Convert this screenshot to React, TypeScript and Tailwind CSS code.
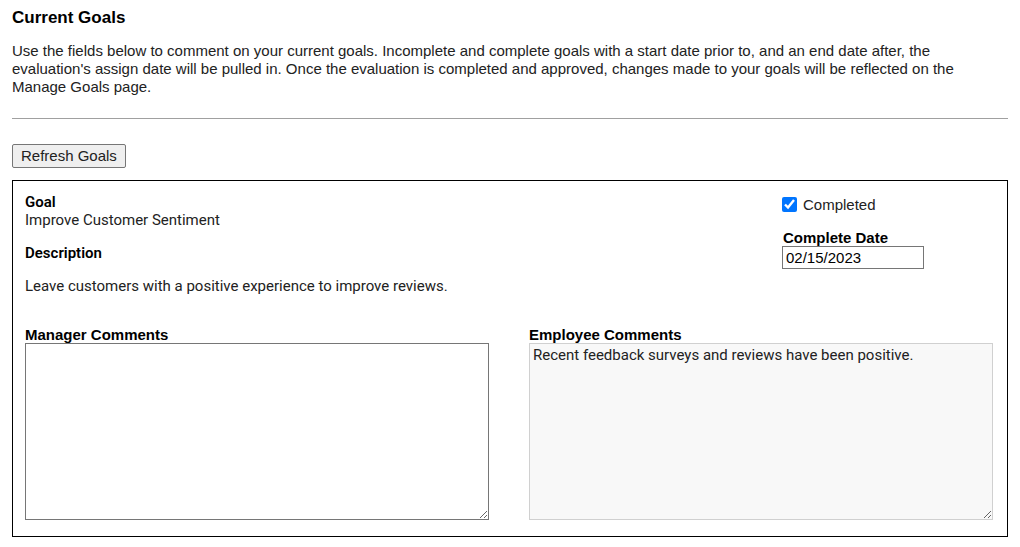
import React from "react";

export default function App() {
  return (
    <div className="min-h-screen bg-white px-3 text-black font-['Liberation_Sans',Arial,sans-serif]">
      <h2 className="pt-2 text-[17px] font-bold leading-[20px]">Current Goals</h2>
      <p className="mt-[14px] text-[15px] leading-[18px] text-[#222]">
        Use the fields below to comment on your current goals. Incomplete and complete goals with a start date prior to, and an end date after, the evaluation's assign date will be pulled in. Once the evaluation is completed and approved, changes made to your goals will be reflected on the Manage Goals page.
      </p>
      <div className="mt-[22px] h-px bg-[#a0a0a0]" />
      <button
        type="button"
        className="mt-[25px] block h-[24px] rounded-[2px] border border-[#767676] bg-[#efefef] px-2 text-[15px] leading-[20px] text-[#222]"
      >
        Refresh Goals
      </button>
      <div className="mt-[12px] h-[357px] border border-black pl-3 pr-[14px] pt-[13px]">
        <div className="flex justify-between">
          <div className="font-['Roboto',sans-serif] text-[15px] text-[#222]">
            <div className="font-semibold leading-[16px] text-black">Goal</div>
            <div className="mt-[2px] leading-[17px]">Improve Customer Sentiment</div>
            <div className="mt-[16px] font-semibold leading-[17px] text-black">Description</div>
            <div className="mt-[16px] leading-[17px]">Leave customers with a positive experience to improve reviews.</div>
          </div>
          <div className="w-[211px] text-[15px]">
            <label className="mt-[2px] flex items-center leading-[17px]">
              <input
                type="checkbox"
                defaultChecked
                className="m-0 h-[15px] w-[15px] accent-[#0075ff]"
              />
              <span className="ml-[6px] text-[#222]">Completed</span>
            </label>
            <div className="mt-[17px] pl-[1px] font-bold leading-[16px] text-black">Complete Date</div>
            <input
              type="text"
              defaultValue="02/15/2023"
              className="block h-[23px] w-[142px] border border-[#767676] px-[3px] text-[15px] leading-[19px] text-black outline-none"
            />
          </div>
        </div>
        <div className="mt-[32px] grid grid-cols-2 gap-[40px]">
          <div>
            <div className="text-[15px] font-bold leading-[16px] text-black">Manager Comments</div>
            <textarea
              className="block h-[177px] w-full resize border border-[#767676] bg-white p-[2px] font-['Roboto',sans-serif] text-[15px] text-black outline-none"
            />
          </div>
          <div>
            <div className="text-[15px] font-bold leading-[16px] text-black">Employee Comments</div>
            <textarea
              readOnly
              defaultValue="Recent feedback surveys and reviews have been positive."
              className="block h-[177px] w-full resize border border-[#d0d0d0] bg-[#f8f8f8] px-[3px] py-[2px] font-['Roboto',sans-serif] text-[15px] leading-[18px] text-[#222] outline-none"
            />
          </div>
        </div>
      </div>
    </div>
  );
}
